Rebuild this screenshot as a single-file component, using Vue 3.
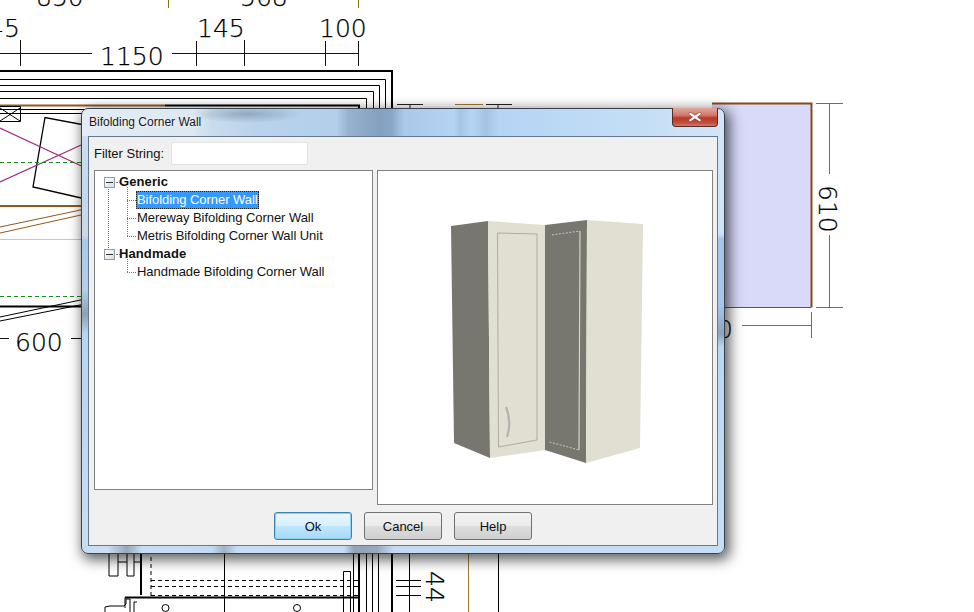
<script setup>
const groups = [
  { name: 'Generic', items: ['Bifolding Corner Wall', 'Mereway Bifolding Corner Wall', 'Metris Bifolding Corner Wall Unit'] },
  { name: 'Handmade', items: ['Handmade Bifolding Corner Wall'] },
]
const selected = 'Bifolding Corner Wall'
</script>

<template>
  <div class="desk">
    <svg class="plan" width="974" height="612" viewBox="0 0 974 612">
      <!-- top dimensions -->
      <g class="dim">
        <text x="36" y="6">850</text>
        <text x="240" y="6">568</text>
        <text x="-12" y="37">45</text>
        <text x="197" y="37">145</text>
        <text x="319" y="37">100</text>
        <text x="100" y="65">1150</text>
      </g>
      <path d="M168.500 0V8M358.500 0V8" stroke="#8a6d1a" fill="none" />
      <path d="M0 53.500H92M172 53.500H358.500M20.500 40V66M196.500 41V66M244.500 40V66M325.500 41V66M358.500 41V66" stroke="#111" fill="none" />
      <!-- wall lines -->
      <path d="M0 71H392V110" stroke="#000" stroke-width="2" fill="none" />
      <path d="M0 79.500H385.500V110M0 85.500H379.500V110M0 91.500H373.500V110M0 98.500H366.500V110" stroke="#000" fill="none" />
      <path d="M165 105.500H359V110" stroke="#000" stroke-width="2" fill="none" />
      <path d="M0 105.500H165" stroke="#8f5a1e" stroke-width="2" fill="none" />
      <path d="M0 109.500H90M0 113.500H90" stroke="#000" fill="none" />
      <path d="M0 106.500H20.500V121.500H0M0 108L20 121M0 121L20 108" stroke="#000" fill="none" />
      <path d="M397 104.500H423M486 104.500H512M410 104V108M498 104V108" stroke="#222" fill="none" />
      <path d="M455 104.500H483" stroke="#a07a30" fill="none" />
      <!-- left room -->
      <path d="M90 126L45 117.500L33 187L90 200" stroke="#000" stroke-width="1.300" fill="none" />
      <path d="M0 128L90 170M0 182L90 141" stroke="#a52a80" stroke-width="1.200" fill="none" />
      <path d="M0 162.500H90" stroke="#1a8a1a" stroke-dasharray="4 3" fill="none" />
      <path d="M0 206H90" stroke="#8f5a1e" stroke-width="2" fill="none" />
      <path d="M0 233L90 213M0 227L90 208" stroke="#8f5a1e" stroke-width="1" fill="none" />
      <path d="M0 239.500H90" stroke="#c4c4e4" fill="none" />
      <path d="M0 296.500H90" stroke="#1a8a1a" stroke-dasharray="4 3" fill="none" />
      <path d="M0 306.500H90" stroke="#000" stroke-width="2" fill="none" />
      <path d="M0 321L90 303M0 317L90 298" stroke="#000" fill="none" />
      <path d="M0 338.500H9M71 338.500H90" stroke="#111" fill="none" />
      <text class="dim" x="15" y="351">600</text>
      <!-- right room -->
      <rect x="712" y="103" width="100" height="204" fill="#d9d9fa" />
      <path d="M712 103.500H811.500V307.500" stroke="#8b4a14" stroke-width="2" fill="none" />
      <path d="M712 307.500H811" stroke="#8b4a14" fill="none" />
      <path d="M816 103.500H843M816 307.500H843M829.500 103.500V174M829.500 235V307.500M742 325.500H811M811.500 312V338" stroke="#8a6d1a" fill="none" />
      <text class="dim" transform="translate(819 185) rotate(90)" x="0" y="0">610</text>
      <text class="dim" x="717" y="338">0</text>
      <!-- bottom -->
      <path d="M109 550V576H118V550M118 562H127V576H134V562H140M127 550V562M134 550V562" stroke="#000" fill="none" />
      <path d="M141 550V595" stroke="#000" stroke-width="2" fill="none" />
      <path d="M151 550V596M151 580.500H358M151 586.500H358M151 595.500H358" stroke="#000" stroke-dasharray="4 3" fill="none" />
      <path d="M125 597.500H359" stroke="#000" stroke-width="2" fill="none" />
      <path d="M224.500 550V612M353.500 550V612M366.500 550V612M372.500 550V612M378.500 550V612M409.500 550V612M498.500 550V612M343.500 612V571.500H350.500V612" stroke="#000" fill="none" />
      <path d="M359 550V612M392 550V612" stroke="#000" stroke-width="2" fill="none" />
      <path d="M468.500 550V612" stroke="#a07a30" fill="none" />
      <path d="M396 580.500H421M396 586.500H421M396 595.500H421" stroke="#000" fill="none" />
      <circle cx="165.500" cy="608" r="3.500" stroke="#000" fill="#fff" />
      <circle cx="297" cy="608" r="3.500" stroke="#000" fill="#fff" />
      <path d="M105 612V607L110 606H124L126 604V599H130V612M125 597.500V608M134 612V602H137" stroke="#000" fill="none" />
      <text class="dim" transform="translate(426 571) rotate(90)" x="0" y="0">44</text>
    </svg>

    <section class="dialog">
      <header class="titlebar">
        <span class="title">Bifolding Corner Wall</span>
        <button class="close" type="button" aria-label="Close">
          <svg width="16" height="12" viewBox="0 0 16 12">
            <path d="M3 1L8 4.200L13 1L14.500 3L10.500 6L14.500 9L13 11L8 7.800L3 11L1.500 9L5.500 6L1.500 3Z" fill="#fff" stroke="#7a2a20" stroke-width=".6" />
          </svg>
        </button>
      </header>

      <div class="client">
        <div class="filter">
          <label class="filter-label">Filter String:</label>
          <input class="filter-input" type="text" />
        </div>

        <div class="panels">
          <div class="tree">
            <i class="root-line"></i>
            <div v-for="g in groups" :key="g.name" class="group">
              <div class="group-row">
                <span class="expander"></span>
                <span class="group-name">{{ g.name }}</span>
              </div>
              <ul class="children">
                <li v-for="item in g.items" :key="item" class="child">
                  <span class="child-label" :class="{ selected: item === selected }">{{ item }}</span>
                </li>
              </ul>
            </div>
          </div>

          <div class="preview">
            <svg width="334" height="333" viewBox="378 171 334 333">
              <polygon points="451,226 488,221 490,458 454,443" fill="#77776f" />
              <polygon points="488,221 545,225 545,450 490,458" fill="#e0dfd1" />
              <polygon points="545,225 587,220 586,463 545,450" fill="#77776f" />
              <polygon points="587,220 643,224 640,448 586,463" fill="#e0dfd1" />
              <polygon points="497.500,233 537,234 537,440 498.500,447" fill="none" stroke="#97968a" stroke-width=".7" />
              <path d="M580 231L579 450" fill="none" stroke="#d3d2c5" stroke-width="1.200" />
              <path d="M552 235L580 231M549.500 442L579 450" fill="none" stroke="#c9c8bb" stroke-width="1" stroke-dasharray="2 1.500" />
              <path d="M506 407Q512 422 507 437" fill="none" stroke="#b4b4ae" stroke-width="2.200" />
            </svg>
          </div>
        </div>

        <div class="actions">
          <button class="btn primary" type="button">Ok</button>
          <button class="btn" type="button">Cancel</button>
          <button class="btn" type="button">Help</button>
        </div>
      </div>
    </section>
  </div>
</template>

<style scoped>
.desk {
  position: relative;
  width: 974px;
  height: 612px;
  overflow: hidden;
  background: #fff;
  font-family: "Liberation Sans", Arial, sans-serif;
}
.plan {
  position: absolute;
  inset: 0;
}
.dim text,
text.dim {
  font-family: "DejaVu Sans", sans-serif;
  font-size: 25px;
  font-weight: 200;
  fill: #000;
  stroke: #000;
  stroke-width: 0.25px;
}
.dialog {
  position: absolute;
  left: 81px;
  top: 108px;
  width: 644px;
  height: 446px;
  box-sizing: border-box;
  border: 1px solid #39434f;
  border-radius: 7px;
  padding: 0 6px 7px;
  display: flex;
  flex-direction: column;
  box-shadow: 3px 4px 13px 2px rgba(0, 0, 0, 0.62);
  background:
    radial-gradient(ellipse 55px 9px at 165px 5px, rgba(110, 130, 155, 0.55), rgba(110, 130, 155, 0) 100%) 0 0 / 100% 27px no-repeat,
    linear-gradient(90deg, #e3ecf4 0, #dde8f2 110px, #c9dced 130px, #b9d3ec 175px, #b3cfea 255px, #98b2cf 266px, #84a0bf 298px, #8ba8c8 310px, #a9c8ea 322px, #b5d4f4 372px, #a5c3e3 378px, #b6d4f3 390px, #a5c3e3 404px, #b5d4f4 416px, #c4def6 560px, #d3e6f8 642px) 0 0 / 100% 27px no-repeat,
    linear-gradient(90deg, #c6dcf0 0, #cbe0f4 25px, #99a8b8 45px, #c6def5 60px, #c2dbf3 130px, #9fb1c4 142px, #c5ddf5 155px, #c4ddf5 262px, #93a3b4 272px, #99a9ba 295px, #c2dbf3 312px, #c5def5 642px) 0 100% / 100% 8px no-repeat,
    linear-gradient(180deg, #cfe0f0 0, #c4d8eb 90px, #d0d8e0 126px, #a9c9ea 132px, #b5cfe8 180px, #8fa0b2 205px, #b8d4ef 225px, #c9def2 446px) 0 0 / 7px 100% no-repeat,
    linear-gradient(180deg, #d3e6f8 0, #cfe4f7 125px, #a6c3ea 130px, #a8c6ec 195px, #8ea4bd 225px, #b9d6f2 238px, #c6dff6 446px) 100% 0 / 7px 100% no-repeat;
}
.titlebar {
  height: 27px;
  flex: none;
  display: flex;
  align-items: flex-start;
  justify-content: space-between;
}
.title {
  margin: 6px 0 0 1px;
  font-size: 12px;
  line-height: 14px;
  color: #1a1a1a;
  text-shadow: 0 0 6px rgba(255, 255, 255, 0.9);
}
.close {
  width: 46px;
  height: 19px;
  margin: -1px 0 0;
  padding: 0;
  box-sizing: border-box;
  border: 1px solid #5a2a26;
  border-top: 0;
  border-radius: 0 0 4px 4px;
  background: linear-gradient(180deg, #e0a79f 0, #d4796b 40%, #b8392a 55%, #c14a38 80%, #cf7a6a 100%);
  display: flex;
  align-items: center;
  justify-content: center;
}
.client {
  flex: 1;
  box-sizing: border-box;
  border: 1px solid #64788f;
  background: #f0f0f0;
  padding: 5px 4px 5px 5px;
  display: flex;
  flex-direction: column;
}
.filter {
  height: 23px;
  display: flex;
  align-items: center;
}
.filter-label {
  width: 77px;
  font-size: 13px;
  color: #111;
}
.filter-input {
  width: 137px;
  height: 23px;
  box-sizing: border-box;
  margin: 0;
  padding: 0;
  border: 1px solid #e2e3e5;
  border-radius: 2px;
  background: #fff;
}
.panels {
  margin-top: 5px;
  display: flex;
  align-items: flex-start;
  gap: 4px;
}
.tree {
  position: relative;
  width: 280px;
  height: 320px;
  box-sizing: border-box;
  border: 1px solid #828282;
  background: #fff;
  padding-top: 2px;
  font-size: 13px;
  letter-spacing: -0.05px;
  color: #111;
}
.root-line {
  position: absolute;
  left: 13px;
  top: 16px;
  height: 63px;
  border-left: 1px dotted #777;
}
.group-row {
  position: relative;
  height: 18px;
  padding-left: 24px;
  line-height: 18px;
}
.expander {
  position: absolute;
  left: 9px;
  top: 4px;
  width: 9px;
  height: 9px;
  border: 1px solid #8e9aa6;
  background: linear-gradient(135deg, #fff, #d8dde2);
  z-index: 1;
}
.expander::before {
  content: "";
  position: absolute;
  left: 1px;
  right: 1px;
  top: 4px;
  height: 1px;
  background: #333;
}
.expander::after {
  content: "";
  position: absolute;
  left: 11px;
  top: 4px;
  width: 4px;
  border-top: 1px dotted #777;
}
.group-name {
  font-weight: 700;
  font-size: 13px;
  letter-spacing: 0.1px;
}
.children {
  position: relative;
  list-style: none;
  margin: 0;
  padding: 0;
}
.children::before {
  content: "";
  position: absolute;
  left: 32px;
  top: -4px;
  bottom: 9px;
  border-left: 1px dotted #777;
}
.child {
  position: relative;
  height: 18px;
  padding-left: 41px;
  line-height: 18px;
}
.child::before {
  content: "";
  position: absolute;
  left: 32px;
  top: 9px;
  width: 9px;
  border-top: 1px dotted #777;
}
.child-label {
  display: inline-block;
  height: 18px;
  box-sizing: border-box;
  padding: 0 1px;
  line-height: 18px;
}
.child-label.selected {
  background: #3399ff;
  color: #fff;
  outline: 1px dotted #222;
  outline-offset: -1px;
}
.preview {
  width: 336px;
  height: 335px;
  box-sizing: border-box;
  border: 1px solid #828282;
  background: #fff;
}
.preview svg {
  display: block;
}
.actions {
  margin: 7px 1px 0 0;
  display: flex;
  justify-content: center;
  gap: 12px;
}
.btn {
  width: 78px;
  height: 28px;
  box-sizing: border-box;
  padding: 0;
  border: 1px solid #707070;
  border-radius: 3px;
  background: linear-gradient(180deg, #f3f3f3 0, #ebebeb 48%, #dddddd 52%, #cfcfcf 100%);
  font-family: inherit;
  font-size: 13px;
  color: #111;
}
.btn.primary {
  border-color: #3c7fb1;
  box-shadow: inset 0 0 0 1px #8fd0ee;
  background: linear-gradient(180deg, #eaf6fd 0, #d9f0fc 48%, #bee6fd 52%, #a7d9f5 100%);
}
</style>
